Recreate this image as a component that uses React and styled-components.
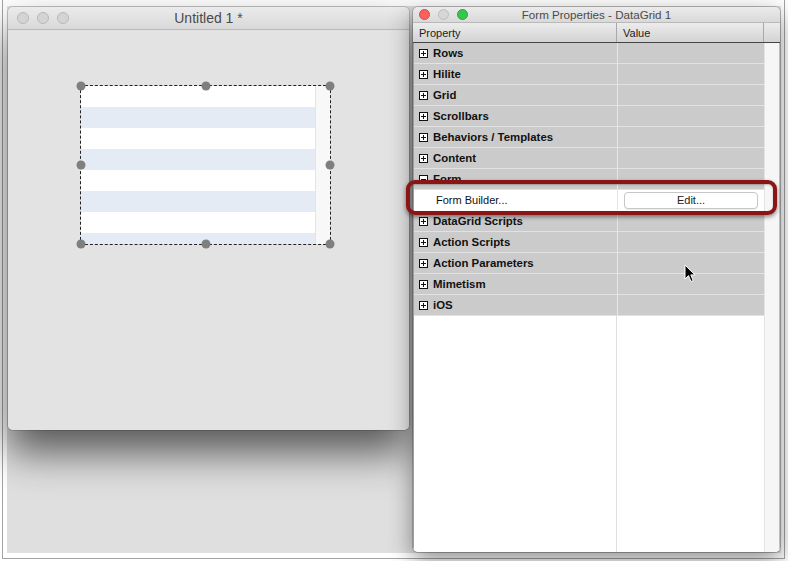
import React from 'react';
import styled, {createGlobalStyle, css} from 'styled-components';

const GlobalStyle = createGlobalStyle`
    html, body {
        margin: 0;
        padding: 0;
        background: #ffffff;
    }
    body {
        font-family: "Liberation Sans", Arial, sans-serif;
        color: #1a1a1a;
    }
    * { box-sizing: border-box; }
`;

const Shot = styled.div`
    width: 788px;
    height: 561px;
    background: #ffffff;
    padding: 0 3px 2px 2px;
`;

const Frame = styled.div`
    width: 100%;
    height: 100%;
    border: 1px solid #a3a3a3;
    border-top: none;
    padding: 6px 3px 5px 4px;
`;

const Desktop = styled.div`
    position: relative;
    width: 100%;
    height: 100%;
    background: #dfdfdf;
    display: flex;
    align-items: flex-start;
    gap: 4px;
    padding: 1px 0 0 1px;
`;

const Window = styled.div`
    display: flex;
    flex-direction: column;
    width: ${p => p.$w}px;
    height: ${p => p.$h}px;
    border-radius: 5px;
    overflow: hidden;
    flex-shrink: 0;
    box-shadow: ${p => p.$shadow};
`;

const TitleBar = styled.div`
    display: grid;
    grid-template-columns: 1fr auto 1fr;
    align-items: center;
    height: ${p => p.$h}px;
    flex-shrink: 0;
    background: linear-gradient(#ebebeb, #d9d9d9);
    border-bottom: 1px solid #b9b9b9;
`;

const Lights = styled.div`
    display: flex;
    gap: ${p => p.$gap}px;
    margin-left: ${p => p.$pad}px;
`;

const Light = styled.span`
    width: ${p => p.$size}px;
    height: ${p => p.$size}px;
    border-radius: 50%;
    background: ${p => p.$color};
    border: 1px solid ${p => p.$edge};
`;

const Title = styled.div`
    font-size: ${p => p.$size}px;
    color: #4a4a4a;
    white-space: nowrap;
`;

const Canvas = styled.div`
    flex: 1;
    background: #e3e3e3;
    padding: 55px 0 0 72px;
`;

const Selection = styled.div`
    position: relative;
    width: 251px;
    height: 160px;
    border: 1px dashed #222;
    display: flex;
`;

const Stripes = styled.div`
    flex: 1;
    display: flex;
    flex-direction: column;
    overflow: hidden;
`;

const Stripe = styled.div`
    height: 21px;
    flex-shrink: 0;
    background: ${p => (p.$alt ? '#e5ebf4' : '#ffffff')};
`;

const GridScroll = styled.div`
    width: 15px;
    background: #f8f8f8;
    border-left: 1px solid #e4e4e4;
`;

const Handle = styled.span`
    position: absolute;
    width: 9px;
    height: 9px;
    border-radius: 50%;
    background: #7f7f7f;
    left: ${p => p.$x};
    top: ${p => p.$y};
    transform: translate(-50%, -50%);
`;

const Header = styled.div`
    display: grid;
    grid-template-columns: 204px 147px 1fr;
    height: 20px;
    flex-shrink: 0;
    background: linear-gradient(#ececec, #d3d3d3);
    border-bottom: 1px solid #454545;
    font-size: 11px;
    color: #222;
`;

const HeadCell = styled.div`
    display: flex;
    align-items: center;
    padding-left: 6px;
    border-right: ${p => (p.$last ? 'none' : '1px solid #a9a9a9')};
`;

const Body = styled.div`
    flex: 1;
    display: flex;
    background: #ffffff;
    border-left: 1px solid #9d9d9d;
`;

const Table = styled.div`
    width: 350px;
    display: flex;
    flex-direction: column;
`;

const Row = styled.div`
    display: grid;
    grid-template-columns: 203px 1fr;
    height: 21px;
    flex-shrink: 0;
    background: ${p => (p.$child ? '#ffffff' : '#cbcbcb')};
    border-bottom: 1px solid ${p => (p.$child ? '#ffffff' : '#e2e2e2')};
    font-size: 11px;
`;

const NameCell = styled.div`
    display: flex;
    align-items: center;
    gap: 5px;
    padding-left: ${p => (p.$child ? 22 : 5)}px;
    font-weight: ${p => (p.$child ? 400 : 700)};
    font-size: ${p => (p.$child ? 11 : 11.4)}px;
    color: #111;
    white-space: nowrap;
    overflow: hidden;
`;

const ValueCell = styled.div`
    display: flex;
    align-items: center;
    border-left: 1px solid #e6e6e6;
    padding-left: 6px;
`;

const Toggle = styled.span`
    position: relative;
    width: 9px;
    height: 9px;
    border: 1px solid #111;
    background: #fff;
    flex-shrink: 0;
    &::before {
        content: "";
        position: absolute;
        left: 1px;
        right: 1px;
        top: 3px;
        height: 1px;
        background: #111;
    }
    ${p => !p.$open && css`
        &::after {
            content: "";
            position: absolute;
            top: 1px;
            bottom: 1px;
            left: 3px;
            width: 1px;
            background: #111;
        }
    `}
`;

const EditButton = styled.button`
    width: 134px;
    height: 17px;
    border: 1px solid #c6c6c6;
    border-radius: 4px;
    background: #ffffff;
    font-family: "Liberation Sans", Arial, sans-serif;
    font-size: 11px;
    color: #222;
    padding: 0;
    box-shadow: 0 1px 0 rgba(0, 0, 0, 0.06);
`;

const Filler = styled.div`
    flex: 1;
    display: grid;
    grid-template-columns: 203px 1fr;
`;

const FillCol = styled.div`
    border-right: ${p => (p.$line ? '1px solid #e0e0e0' : 'none')};
`;

const SideScroll = styled.div`
    flex: 1;
    background: #f6f6f6;
    border-left: 1px solid #e3e3e3;
    border-right: 1px solid #bdbdbd;
`;

const Callout = styled.div`
    position: absolute;
    left: 399px;
    top: 174px;
    width: 371px;
    height: 35px;
    border: 4px solid #8b1515;
    border-radius: 9px;
    box-shadow: 0 2px 4px rgba(0, 0, 0, 0.45), inset 0 1px 2px rgba(0, 0, 0, 0.25);
    pointer-events: none;
`;

const Cursor = styled.svg`
    position: absolute;
    left: 677px;
    top: 258px;
`;

const properties = [
    {name: 'Rows'},
    {name: 'Hilite'},
    {name: 'Grid'},
    {name: 'Scrollbars'},
    {name: 'Behaviors / Templates'},
    {name: 'Content'},
    {name: 'Form', open: true},
    {name: 'Form Builder...', child: true},
    {name: 'DataGrid Scripts'},
    {name: 'Action Scripts'},
    {name: 'Action Parameters'},
    {name: 'Mimetism'},
    {name: 'iOS'},
];

const handles = [
    ['0%', '0%'], ['50%', '0%'], ['100%', '0%'],
    ['0%', '50%'], ['100%', '50%'],
    ['0%', '100%'], ['50%', '100%'], ['100%', '100%'],
];

function App() {
    return (
        <Shot>
            <GlobalStyle />
            <Frame>
                <Desktop>
                    <Window $w={401} $h={423} $shadow="0 22px 40px rgba(0,0,0,0.62), 0 0 0 1px rgba(0,0,0,0.14)">
                        <TitleBar $h={23}>
                            <Lights $gap={8} $pad={9}>
                                <Light $size={12} $color="#d4d4d4" $edge="#b8b8b8" />
                                <Light $size={12} $color="#d4d4d4" $edge="#b8b8b8" />
                                <Light $size={12} $color="#d4d4d4" $edge="#b8b8b8" />
                            </Lights>
                            <Title $size={14}>Untitled 1 *</Title>
                        </TitleBar>
                        <Canvas>
                            <Selection>
                                <Stripes>
                                    {[0, 1, 2, 3, 4, 5, 6, 7].map(i => (
                                        <Stripe key={i} $alt={i % 2 === 1} />
                                    ))}
                                </Stripes>
                                <GridScroll />
                                {handles.map(([x, y]) => (
                                    <Handle key={x + y} $x={x} $y={y} />
                                ))}
                            </Selection>
                        </Canvas>
                    </Window>

                    <Window $w={367} $h={545} $shadow="0 8px 24px rgba(0,0,0,0.45), 0 0 0 1px rgba(0,0,0,0.18)">
                        <TitleBar $h={16}>
                            <Lights $gap={8} $pad={6}>
                                <Light $size={11} $color="#fc605c" $edge="#de4a45" />
                                <Light $size={11} $color="#d6d6d6" $edge="#bdbdbd" />
                                <Light $size={11} $color="#34c84a" $edge="#27a83a" />
                            </Lights>
                            <Title $size={11.6}>Form Properties - DataGrid 1</Title>
                        </TitleBar>
                        <Header>
                            <HeadCell>Property</HeadCell>
                            <HeadCell>Value</HeadCell>
                            <HeadCell $last />
                        </Header>
                        <Body>
                            <Table>
                                {properties.map(p => (
                                    <Row key={p.name} $child={p.child}>
                                        <NameCell $child={p.child}>
                                            {!p.child && <Toggle $open={p.open} />}
                                            {p.name}
                                        </NameCell>
                                        <ValueCell>
                                            {p.child && <EditButton>Edit...</EditButton>}
                                        </ValueCell>
                                    </Row>
                                ))}
                                <Filler>
                                    <FillCol $line />
                                    <FillCol />
                                </Filler>
                            </Table>
                            <SideScroll />
                        </Body>
                    </Window>

                    <Callout />
                    <Cursor width="12" height="19" viewBox="0 0 12 19">
                        <path d="M1 1 L1 15 L4.5 11.6 L7 17.5 L9.2 16.6 L6.8 10.9 L11 10.9 Z" fill="#000" stroke="#fff" strokeWidth="1" strokeLinejoin="round" />
                    </Cursor>
                </Desktop>
            </Frame>
        </Shot>
    );
}

export default App;
